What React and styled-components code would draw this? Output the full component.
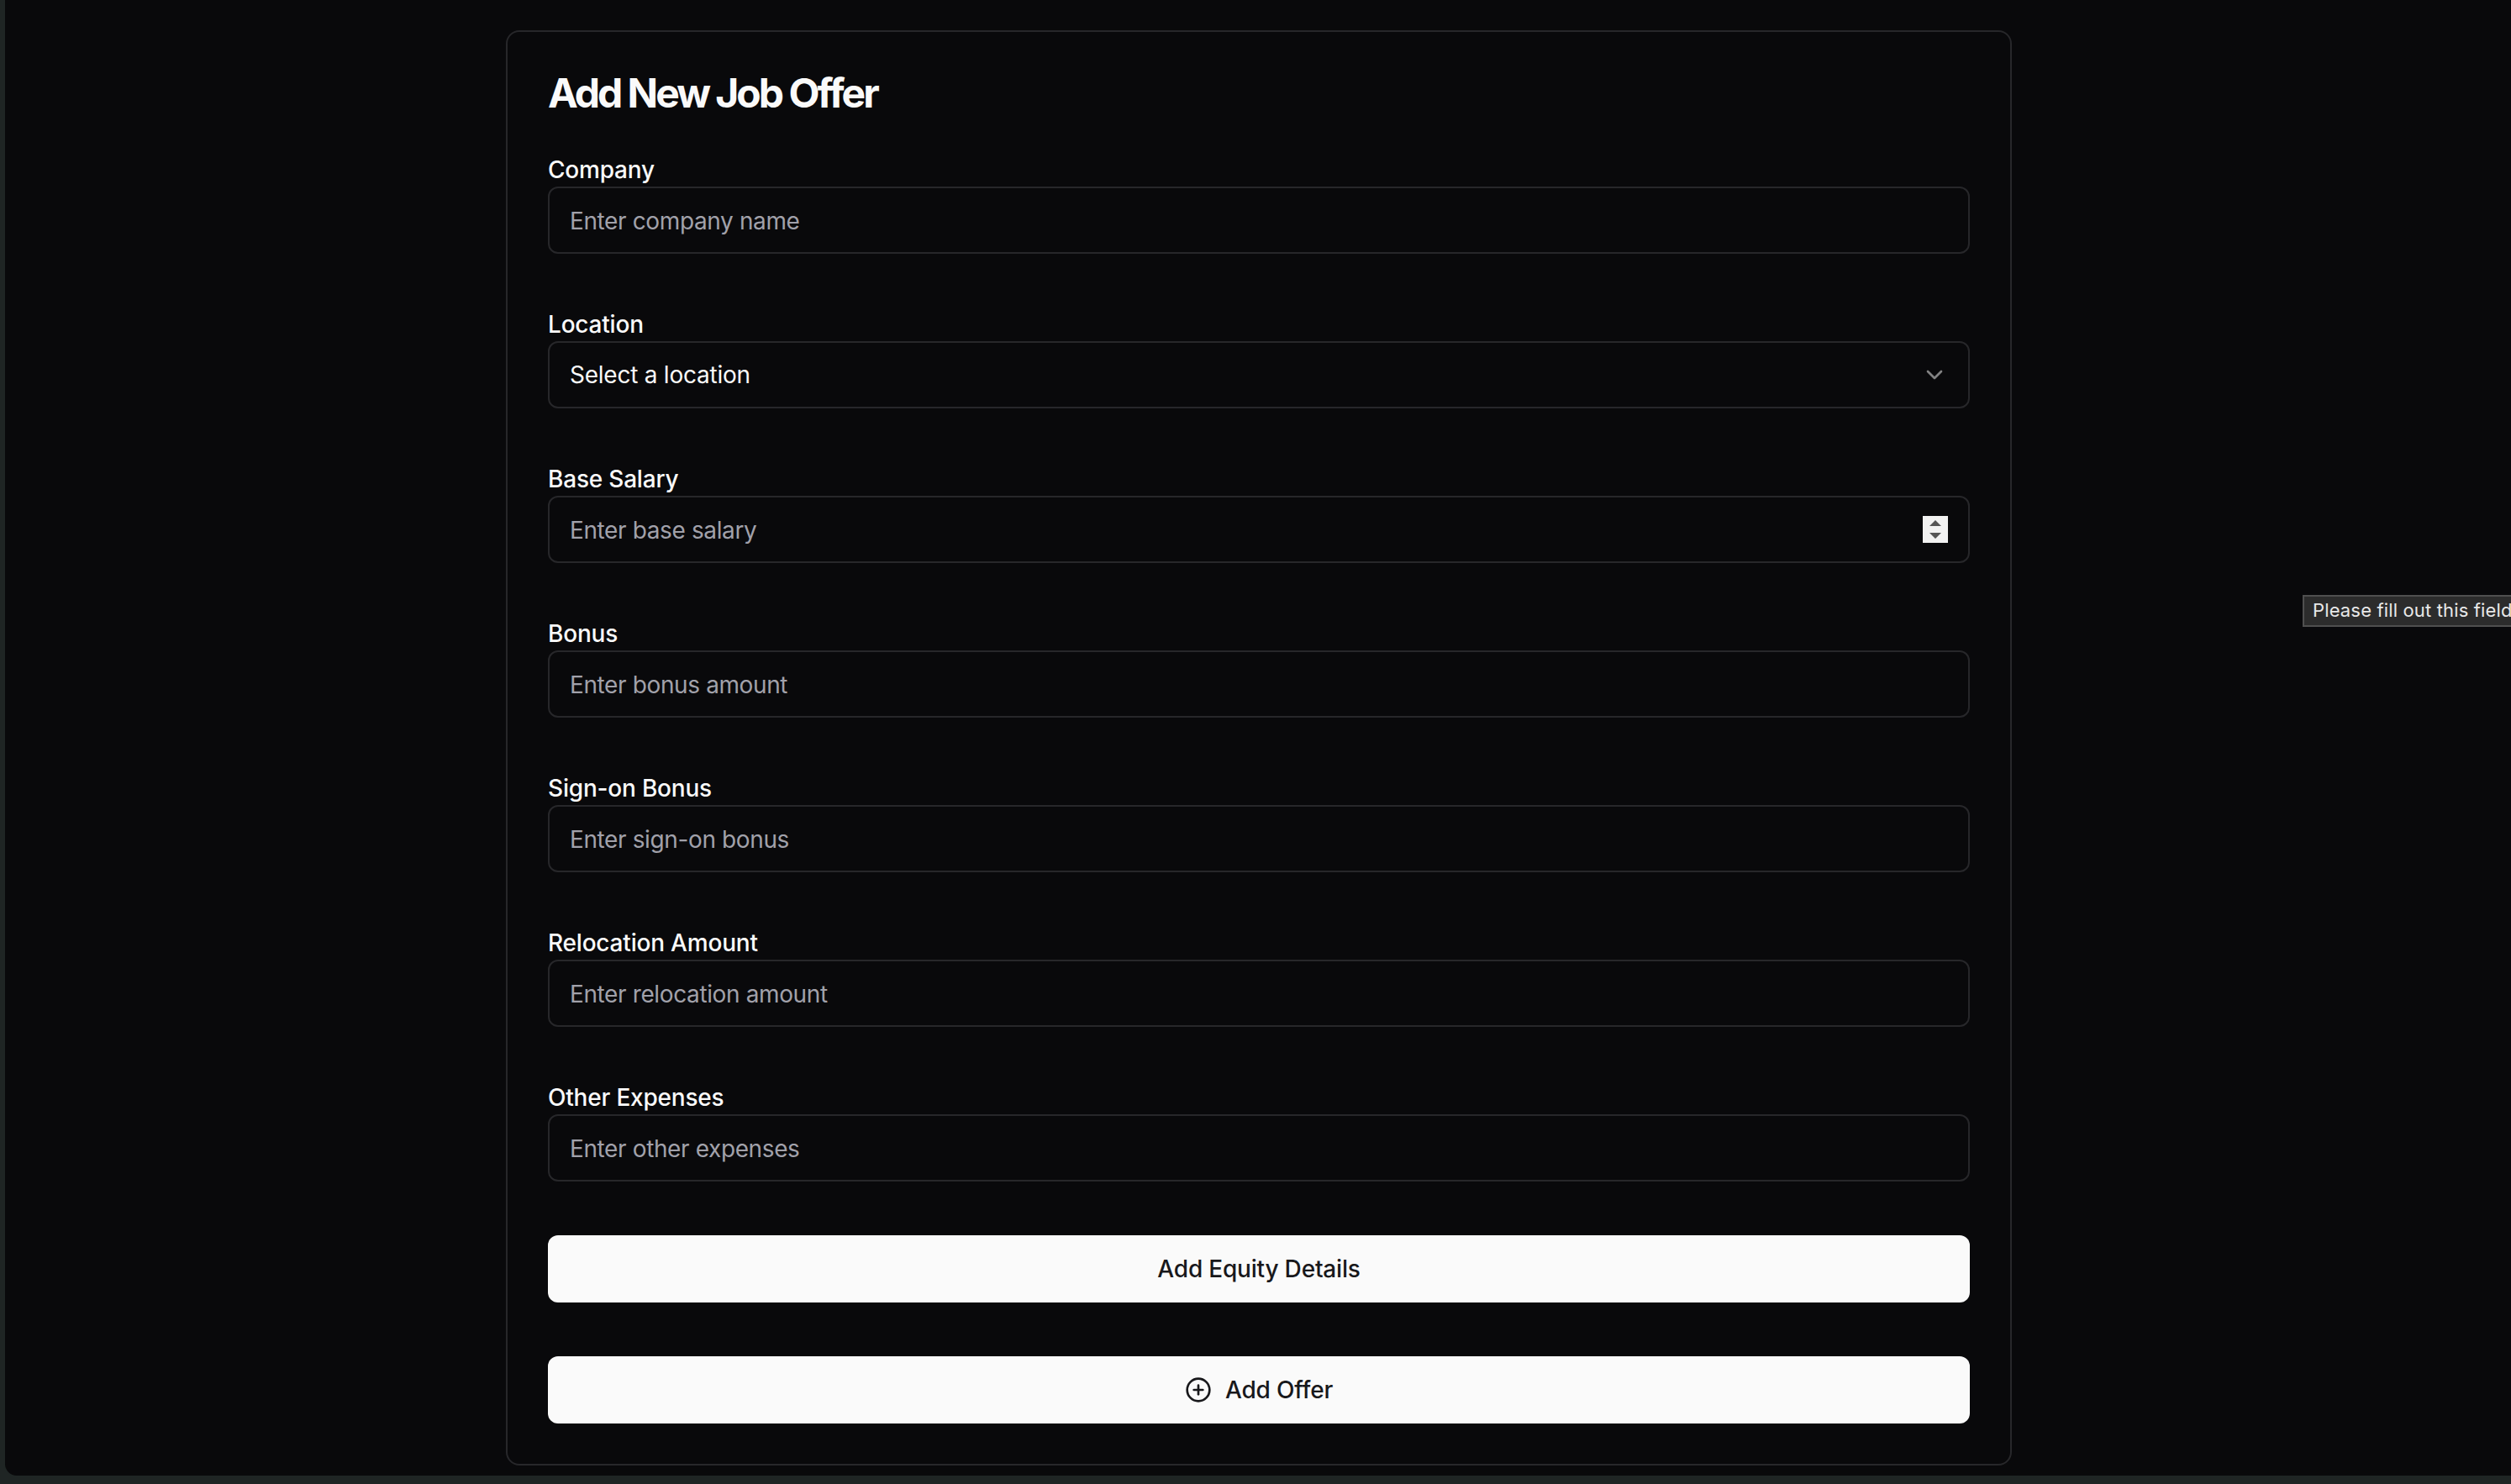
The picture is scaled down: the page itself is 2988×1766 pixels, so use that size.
import React from 'react';
import styled, { createGlobalStyle } from 'styled-components';
import { ChevronDown, CirclePlus } from 'lucide-react';

const GlobalStyle = createGlobalStyle`
  html, body {
    margin: 0;
    padding: 0;
    height: 100%;
    overflow: hidden;
    background: #1f2524;
  }

  * {
    box-sizing: border-box;
  }
`;

const Frame = styled.div`
  position: relative;
  width: 2988px;
  height: 1766px;
  padding: 0 0 10px 6px;
  overflow: hidden;
  font-family: Inter, 'Liberation Sans', sans-serif;
`;

const Page = styled.main`
  height: 100%;
  padding: 36px 0 0 596px;
  background: #09090b;
  border-bottom-left-radius: 14px;
`;

const Card = styled.section`
  width: 1792px;
  height: 1708px;
  padding: 48px;
  background: #09090b;
  border: 2px solid #27272a;
  border-radius: 16px;
`;

const Title = styled.h1`
  margin: 0 0 46px;
  font-size: 48px;
  line-height: 50px;
  font-weight: 700;
  letter-spacing: -3px;
  color: #fafafa;
`;

const Form = styled.form`
  display: flex;
  flex-direction: column;
  gap: 64px;
`;

const Field = styled.div`
  display: flex;
  flex-direction: column;
`;

const Label = styled.label`
  font-size: 28px;
  line-height: 40px;
  font-weight: 500;
  letter-spacing: -0.2px;
  color: #fafafa;
`;

const InputWrap = styled.div`
  position: relative;
`;

const Input = styled.input`
  display: block;
  width: 100%;
  height: 80px;
  padding: 2px 24px 0;
  font: inherit;
  font-size: 28px;
  letter-spacing: -0.38px;
  color: #fafafa;
  background: transparent;
  border: 2px solid #27272a;
  border-radius: 12px;
  outline: none;

  &::placeholder {
    color: #a1a1aa;
    opacity: 1;
  }
`;

const Select = styled.button`
  display: flex;
  align-items: center;
  justify-content: space-between;
  width: 100%;
  height: 80px;
  padding: 0 24px;
  font: inherit;
  font-size: 28px;
  letter-spacing: -0.24px;
  color: #fafafa;
  background: transparent;
  border: 2px solid #27272a;
  border-radius: 12px;

  svg {
    opacity: 0.5;
  }
`;

const Stepper = styled.svg`
  position: absolute;
  top: 24px;
  right: 26px;
  display: block;
`;

const Button = styled.button`
  display: flex;
  align-items: center;
  justify-content: center;
  gap: 16px;
  width: 100%;
  height: 80px;
  font: inherit;
  font-size: 28px;
  font-weight: 500;
  letter-spacing: -0.2px;
  color: #18181b;
  background: #fafafa;
  border: none;
  border-radius: 12px;
`;

const Tooltip = styled.div`
  position: absolute;
  top: 708px;
  left: 2740px;
  height: 38px;
  padding: 0 10px;
  font-size: 22px;
  line-height: 33px;
  letter-spacing: 0.15px;
  white-space: nowrap;
  color: #e8e8e8;
  background: #2c2c2c;
  border: 2px solid #4f4f4f;
`;

const fields = [
  { id: 'company', label: 'Company', placeholder: 'Enter company name' },
  { id: 'location', label: 'Location', select: 'Select a location' },
  { id: 'base', label: 'Base Salary', placeholder: 'Enter base salary', stepper: true },
  { id: 'bonus', label: 'Bonus', placeholder: 'Enter bonus amount' },
  { id: 'signon', label: 'Sign-on Bonus', placeholder: 'Enter sign-on bonus' },
  { id: 'relocation', label: 'Relocation Amount', placeholder: 'Enter relocation amount' },
  { id: 'other', label: 'Other Expenses', placeholder: 'Enter other expenses' },
];

const NumberSpinner = () => (
  <Stepper width="30" height="32" viewBox="0 0 30 32">
    <rect width="30" height="32" fill="#f2f2f2" />
    <path d="M15 5 L22 12 H8 Z M15 27 L22 20 H8 Z" fill="#555555" />
  </Stepper>
);

const FormField = ({ field }) => (
  <Field>
    <Label htmlFor={field.id}>{field.label}</Label>
    {field.select ? (
      <Select id={field.id} type="button">
        {field.select}
        <ChevronDown size={32} />
      </Select>
    ) : (
      <InputWrap>
        <Input id={field.id} placeholder={field.placeholder} />
        {field.stepper && <NumberSpinner />}
      </InputWrap>
    )}
  </Field>
);

const App = () => (
  <Frame>
    <GlobalStyle />
    <Page>
      <Card>
        <Title>Add New Job Offer</Title>
        <Form>
          {fields.map((field) => (
            <FormField field={field} key={field.id} />
          ))}
          <Button type="button">Add Equity Details</Button>
          <Button type="button">
            <CirclePlus size={32} />
            Add Offer
          </Button>
        </Form>
      </Card>
    </Page>
    <Tooltip>Please fill out this field</Tooltip>
  </Frame>
);

export default App;
